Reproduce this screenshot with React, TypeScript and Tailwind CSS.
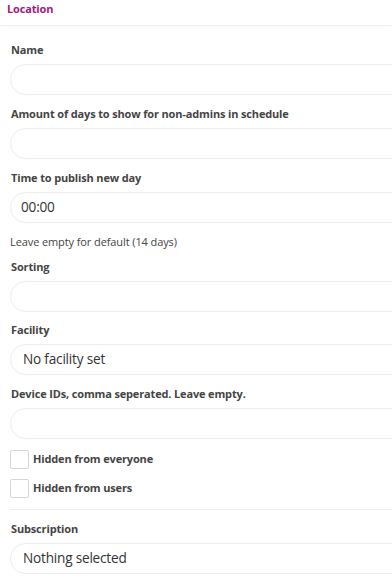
import React from "react";

const font = { fontFamily: '"Open Sans", "Noto Sans", sans-serif' };

function Label({ children }: { children: React.ReactNode }) {
  return (
    <div className="text-[11px] leading-[14px] font-bold tracking-[-0.15px] text-[#444444] pl-[1px]">{children}</div>
  );
}

function Field({
  label,
  value,
  input,
  className,
}: {
  label: string;
  value?: string;
  input?: boolean;
  className?: string;
}) {
  return (
    <div className={className ?? "mb-[12px]"}>
      <Label>{label}</Label>
      <div
        className={
          input
            ? "mt-[7px] h-[31px] w-[420px] rounded-[16px] border border-[#ececec] bg-white flex items-center pl-[10px]"
            : "mt-[7px] h-[31px] w-[420px] rounded-[16px] border border-[#ececec] bg-white flex items-center pl-[12px]"
        }
      >
        {value ? <span className="text-[13.6px] tracking-[-0.2px] text-[#333333]">{value}</span> : null}
      </div>
    </div>
  );
}

function Check({ label }: { label: string }) {
  return (
    <div className="flex items-center h-[18px]">
      <div className="w-[19px] h-[19px] border border-[#d6d6d6] rounded-[2px] bg-white" />
      <span className="ml-[4px] text-[11px] font-bold tracking-[-0.15px] text-[#444444]">{label}</span>
    </div>
  );
}

export default function App() {
  return (
    <div className="w-[392px] h-[586px] overflow-hidden bg-white" style={font}>
      <div className="h-[26px] border-b border-[#f0f0f0] shadow-[0_1px_2px_rgba(0,0,0,0.03)] pl-[7px]">
        <div className="text-[11px] leading-[18px] font-bold tracking-[-0.15px] text-[#a3197f]">Location</div>
      </div>
      <div className="pl-[10px] pt-[17px]">
        <Field label="Name" />
        <Field label="Amount of days to show for non-admins in schedule" />
        <Field label="Time to publish new day" value="00:00" input className="mb-0" />
        <div className="mt-[12px] mb-[11px] text-[11px] leading-[14px] tracking-[-0.1px] text-[#444444]">
          Leave empty for default (14 days)
        </div>
        <Field label="Sorting" className="mb-[11px]" />
        <Field label="Facility" value="No facility set" />
        <Field label="Device IDs, comma seperated. Leave empty." className="mb-0" />
        <div className="mt-[11px] flex flex-col gap-[11px]">
          <Check label="Hidden from everyone" />
          <Check label="Hidden from users" />
        </div>
        <div className="mt-[12px] border-t border-[#eeeeee]" />
        <div className="mt-[12px]">
          <Field label="Subscription" value="Nothing selected" />
        </div>
      </div>
    </div>
  );
}
